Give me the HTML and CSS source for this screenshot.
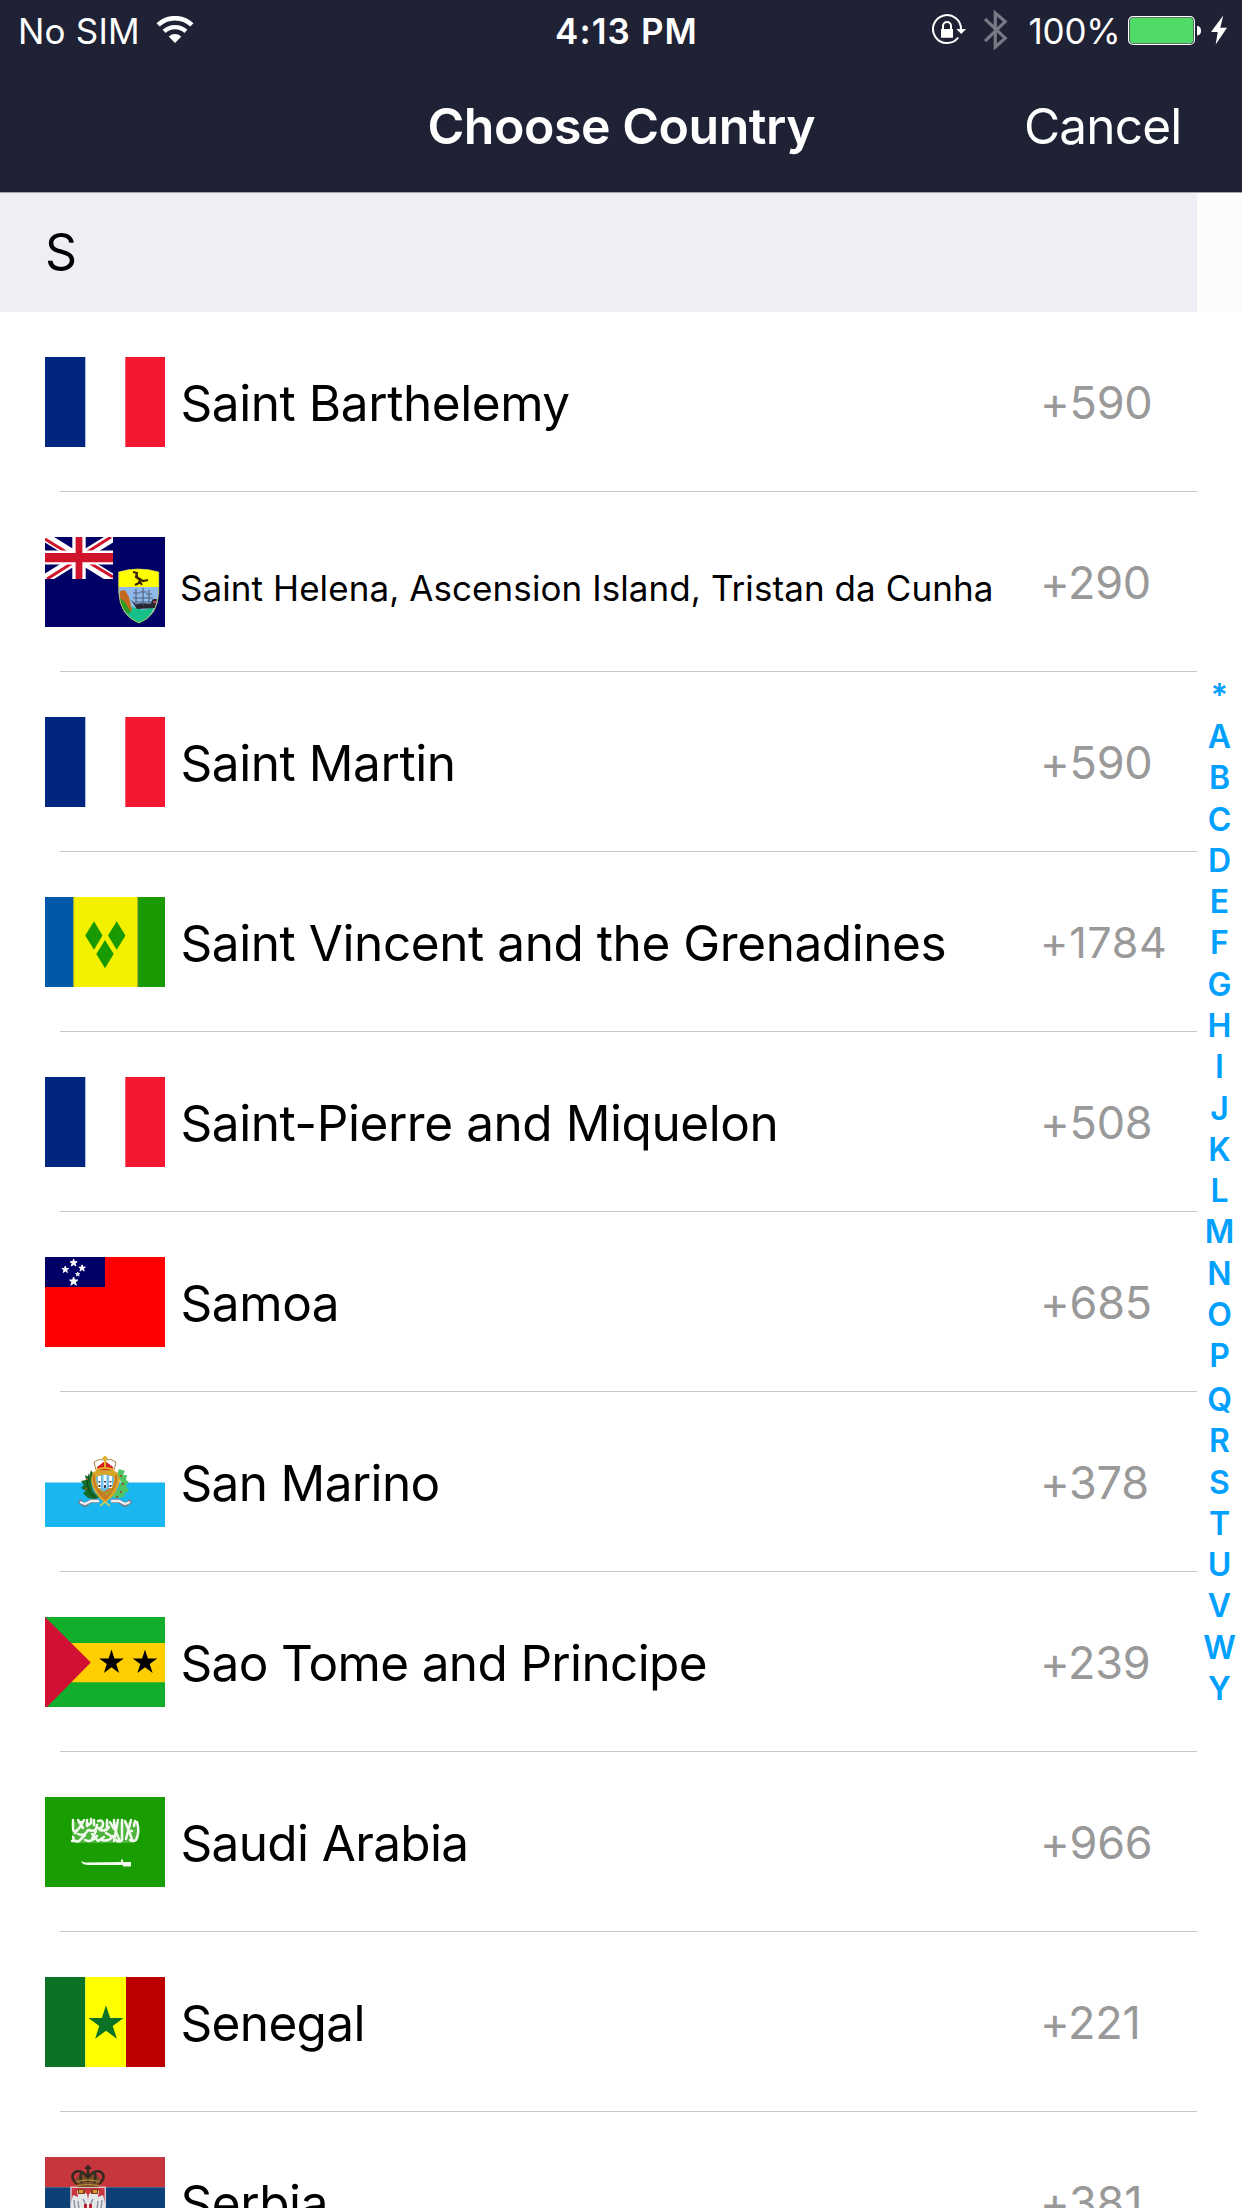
FILE: index.html
```html
<!DOCTYPE html>
<html lang="en">
<head>
<meta charset="utf-8">
<title>Choose Country</title>
<link rel="stylesheet" href="styles.css">
</head>
<body>
<svg class="defs" aria-hidden="true">
  <symbol id="star" viewBox="-1 -1 2 2"><path d="M0-1 .2245-.309 .951-.309 .363.118 .588.809 0 .382-.588.809-.363.118-.951-.309-.2245-.309Z"/></symbol>
  <symbol id="fr" viewBox="0 0 120 90"><path fill="#fff" d="M0 0h120v90H0z"/><path fill="#00267f" d="M0 0h40.300v90H0z"/><path fill="#f31830" d="M80.300 0H120v90H80.300z"/></symbol>
</svg>
<header class="header">
  <div class="status">
    <div class="status-left">
      <span class="carrier">No SIM</span>
      <svg class="wifi" width="38" height="28" viewBox="0 0 38 28">
        <g fill="none" stroke="#fff"><path stroke-width="4.700" d="M2.100 8.900A24.700 24.700 0 0 1 35.900 8.900"/><path stroke-width="4.400" d="M8.100 15.400A15.900 15.900 0 0 1 29.900 15.400"/></g>
        <path fill="#fff" d="M19 27 12.700 20.400Q19 15.700 25.300 20.400Z"/>
      </svg>
    </div>
    <span class="time">4:13 PM</span>
    <div class="status-right">
      <svg class="lock" width="35" height="32" viewBox="0 0 35 32">
        <path fill="none" stroke="#fff" stroke-width="2" d="M29 15.500A14 14 0 1 0 26.200 23.500"/>
        <path fill="#fff" d="M24.300 15h9.800l-4.900 5zM9 15h12v8.700H9z"/>
        <path fill="none" stroke="#fff" stroke-width="2" d="M11 15.500v-3.500a4 4 0 0 1 8 0v3.500"/>
      </svg>
      <svg class="bluetooth" width="24" height="42" viewBox="0 0 24 42"><path fill="none" stroke="#787983" stroke-width="3.200" d="M1 10 21.200 29.200 11.300 38V4L21.200 12.600 1 32"/></svg>
      <span class="percent">100%</span>
      <svg class="battery" width="73" height="29" viewBox="0 0 73 29">
        <rect x=".6" y=".6" width="65.800" height="27.800" rx="4.500" fill="none" stroke="#fff" stroke-width="1.200"/>
        <rect x="1.800" y="1.800" width="63.400" height="25.400" rx="3.500" fill="#4fdb66"/>
        <path fill="#fff" d="M69 9.800q4 .6 4 4.900t-4 4.900z"/>
      </svg>
      <svg class="bolt" width="16" height="30" viewBox="0 0 16 30"><path fill="#fff" d="M12.200.5 0 17h6.700L4.700 29.500 16 12.700H9.300Z"/></svg>
    </div>
  </div>
  <div class="nav">
    <h1 class="title">Choose Country</h1>
    <a class="cancel">Cancel</a>
  </div>
</header>
<main class="content">
  <section class="list">
    <h2 class="letter">S</h2>
    <div class="row">
      <svg class="flag"><use href="#fr"/></svg>
      <span class="name">Saint Barthelemy</span><span class="code">+590</span>
    </div>
    <div class="row">
      <svg class="flag" viewBox="0 0 120 90">
        <path fill="#006" d="M0 0h120v90H0z"/>
        <svg width="68" height="42" viewBox="0 0 68 42">
          <path stroke="#fff" stroke-width="9.500" d="M0 0 68 42M68 0 0 42"/>
          <path stroke="#cf142b" stroke-width="3" d="M0 2 31 21M66 0 36 19M2 42 32 23M68 40 38 22"/>
          <path fill="#fff" d="M27.300 0h13.400v42H27.300zM0 13.600h68v14H0z"/>
          <path fill="#cf142b" d="M30.600 0h6.800v42h-6.800zM0 15.900h68v9.400H0z"/>
        </svg>
        <path fill="#8fbbea" d="M73.700 35Q93 29 113.700 35V55Q113 79 94 86 75 79 73.700 55Z"/>
        <path fill="#ff0" d="M73.700 35Q93 29 113.700 35V50H73.700Z"/>
        <path fill="#17c088" d="M78 71 88 70 98 73 109 70Q105 82 94 86 84 82 78 71Z"/>
        <path fill="#c46a20" d="M75 54 80 53 84 60 87 73 84 76 78 70Q74 63 75 54Z"/>
        <path fill="#2c9b24" d="M75 61 79 64 86 75 83 77 77 70Z"/>
        <path fill="#282633" d="M86 63 91 67 98 66 105 67 108 62 112 62 110 71 92 72Z"/>
        <path fill="none" stroke="#53637c" stroke-width="1.200" d="M91 52v16M98 51v17M104 53v14M88 56h7M95 55h7M101 57h6M88 61h20M90 65h17"/>
        <path fill="none" stroke="#392600" stroke-width="2.200" d="M88 35 92 36 91 40 95 42 94 46 90 48M92 41 98 44 103 43M95 45 97 48M91 36 93 42"/>
        <path fill="#b83c45" d="M108 64h3v2h-3z"/>
        <path fill="none" stroke="#d5d23c" stroke-width=".7" d="M73.700 35Q93 29 113.700 35V55Q113 79 94 86 75 79 73.700 55Z"/>
      </svg>
      <span class="name small">Saint Helena, Ascension Island, Tristan da Cunha</span><span class="code">+290</span>
    </div>
    <div class="row">
      <svg class="flag"><use href="#fr"/></svg>
      <span class="name">Saint Martin</span><span class="code">+590</span>
    </div>
    <div class="row">
      <svg class="flag" viewBox="0 0 120 90">
        <path fill="#f4f100" d="M0 0h120v90H0z"/><path fill="#0058aa" d="M0 0h28.200v90H0z"/><path fill="#199a00" d="M93 0h27v90H93z"/>
        <path fill="none" stroke="#9aa63a" d="M28.700 0v90M92.700 0v90"/>
        <path fill="#199a00" d="M49 24.300 57.500 38.500 49 52.700 40.200 38.500ZM71.700 24.300 80.500 38.500 71.700 52.700 63 38.500ZM60 43 68.700 57 60 71.200 51.300 57Z"/>
      </svg>
      <span class="name">Saint Vincent and the Grenadines</span><span class="code small-code">+1784</span>
    </div>
    <div class="row">
      <svg class="flag"><use href="#fr"/></svg>
      <span class="name">Saint-Pierre and Miquelon</span><span class="code">+508</span>
    </div>
    <div class="row">
      <svg class="flag" viewBox="0 0 120 90">
        <path fill="red" d="M0 0h120v90H0z"/><path fill="#006" d="M0 0h60v30H0z"/>
        <g fill="#fff" stroke="#fff" stroke-width=".25"><use href="#star" x="24.700" y="2" width="7.800" height="7.800"/><use href="#star" x="16.700" y="9" width="7.200" height="7.200"/><use href="#star" x="33.500" y="7.600" width="7.200" height="7.200"/><use href="#star" x="30.200" y="14.700" width="5" height="5"/><use href="#star" x="24.300" y="20.100" width="8.600" height="8.600"/></g>
      </svg>
      <span class="name">Samoa</span><span class="code">+685</span>
    </div>
    <div class="row">
      <svg class="flag" viewBox="0 0 120 90">
        <path fill="#fff" d="M0 0h120v90H0z"/><path fill="#1ab6f0" d="M0 45.500h120V90H0z"/>
        <path fill="#176b25" d="M46 33 49 38 46 46 48 54 54 61 49 62 43 61 38 56 41 54 36 51 39 48 36 44 41 43 40 38 44 40Z"/>
        <path fill="#4fc566" d="M74 32 80 34 78 38 82 38 81 43 84 45 81 48 84 54 80 56 79 60 71 61 66 59 73 53 76 45 72 38Z"/>
        <path fill="none" stroke="#0d4b18" stroke-width="1" d="M44 37 42 46 45 56 51 61"/>
        <path fill="#8a5b30" d="M75 38h2v2h-2zM77 46h2v2h-2zM75 54h2v2h-2zM71 59h2v2h-2zM41 41h2v2h-2zM40 51h2v2h-2z"/>
        <path fill="#d9a62a" d="M48 35Q60 29 72 35L75 42Q74 56 60 66 47 56 46 42Z"/>
        <path fill="#69bde7" d="M51 40Q60 35 69 40 70 51 60 55 51 51 51 40Z"/>
        <path fill="#a3a038" d="M51 51 60 55 69 51Q66 59 60 62 54 59 51 51Z"/>
        <path fill="none" stroke="#c97926" stroke-width="2" d="M49 38Q47 50 60 62 73 50 71 38M53 53 63 61M59 56 66 51"/>
        <path fill="#fff" d="M53 39h3v12h-3zM58.500 38h3v13h-3zM64 39h3v12h-3z"/>
        <path fill="#333c50" d="M53.500 44h2v1.500h-2zM59 44h2v1.500h-2zM64.500 44h2v1.500h-2zM53.500 48h2v2h-2zM59 48h2v3h-2zM64.500 48h2v2h-2z"/>
        <path fill="#fff" stroke="#a78745" stroke-width="1" d="M49 25Q54 21 60 23 66 21 71 25L69 33H51Z"/>
        <path fill="#d51e22" d="M52 30 56 27 60 24 64 27 68 30V33H52Z"/>
        <path fill="none" stroke="#e3af27" stroke-width="2" d="M51 33Q60 29 69 33M60 19v13M57.500 21h5"/>
        <path fill="none" stroke="#777c88" stroke-width="4" d="M34 64 40 68 46 64 54 64M86 64 80 68 74 64 66 64"/>
        <path fill="none" stroke="#eef1f5" stroke-width="2.400" d="M35 65 40 67 46 64 54 64M85 65 80 67 74 64 66 64"/>
        <path fill="none" stroke="#e2ce40" stroke-width="1.600" d="M55 69 60 65 65 69"/>
      </svg>
      <span class="name tight">San Marino</span><span class="code">+378</span>
    </div>
    <div class="row">
      <svg class="flag" viewBox="0 0 120 90">
        <path fill="#12ad2b" d="M0 0h120v90H0z"/><path fill="#ffce00" d="M0 26h120v39.300H0z"/><path fill="#d21034" d="M0 0 45.800 45.500 2 90H0Z"/>
        <use href="#star" x="53.500" y="32.400" width="26" height="26"/><use href="#star" x="87" y="32.400" width="26" height="26"/>
      </svg>
      <span class="name tight">Sao Tome and Principe</span><span class="code">+239</span>
    </div>
    <div class="row">
      <svg class="flag" viewBox="0 0 120 90">
        <path fill="#199d00" d="M0 0h120v90H0z"/>
        <path fill="#8fcf83" d="M27 25h66l1 17-6 4H30l-3-4z" opacity=".45"/>
        <g fill="none" stroke="#f1f9ee" stroke-width="2.500" stroke-linecap="round" stroke-linejoin="round">
          <path d="M28 23v8q0 5 4 2M33 23l5 8M39 23q-4 8-9 13M28 40q1 6 6 4l6-6M33 37q6 3 10-4M27 44h4M42 23v6l4-3v-4M44 33q7 3 8-5M40 43q6 3 12-4M49 23v5M53 24q5-2 5 3t-6 4M47 37l6 7 6-4M55 33q6 2 9-3M62 23v7M65 25l4 7M57 43q7 2 11-4M61 36l5 3M69 23q0 9 5 19M73 23l-4 21M77 23v20q-3 3-6 0M80 24l7 18M86 23l-5 19M90 24l-1 5M92 25q3 10-1 18-3 2-6 0M83 34h4M36 29v-4M51 34l-4 8"/>
        </g>
        <path fill="#f1f9ee" d="M36 64 40 65.500 76 65V62.500H78V65H86V69.500H78V68H76L42 68 38 67Z"/>
      </svg>
      <span class="name tight">Saudi Arabia</span><span class="code">+966</span>
    </div>
    <div class="row">
      <svg class="flag" viewBox="0 0 120 90">
        <path fill="#0b7226" d="M0 0h40.300v90H0z"/><path fill="#ff0" d="M40.300 0h40.700v90H40.300z"/><path fill="#bc0000" d="M81 0h39v90H81z"/>
        <use href="#star" x="42.500" y="28.200" width="37" height="37" fill="#0b7226"/>
      </svg>
      <span class="name tight">Senegal</span><span class="code">+221</span>
    </div>
    <div class="row">
      <svg class="flag" viewBox="0 0 120 90">
        <path fill="#fff" d="M0 0h120v90H0z"/><path fill="#c6363c" d="M0 0h120v30.300H0z"/><path fill="#0c4076" d="M0 30.300h120V60H0z"/>
        <path fill="#c6363c" stroke="#d8c3cf" stroke-width="1.500" d="M26 30.300H60.300V60Q57 70 43 76 29 70 26 60Z"/>
        <path fill="#e4e6ea" d="M36 32 42 37 43 42 44 37 50 32 54 34 53 40 58 38 60 46V60L54 66 43 72 32 66 26 60V46L28 38 33 40 32 34Z"/>
        <path fill="none" stroke="#8a8e99" stroke-width="1.400" d="M29 43 31 60M33 44 35 61M57 43 55 60M53 44 51 61M38 42 41 48M48 42 45 48"/>
        <path fill="#b52431" d="M39 47h8v13h-8z"/><path fill="#eee" d="M42 47h2v13h-2zM39 51h8v2h-8z"/>
        <path fill="#8d3a25" d="M33 32h7v5h-7zM46 32h7v5h-7z"/><path fill="#d49b2d" d="M34 33h4v3h-4zM48 33h4v3h-4z"/>
        <path fill="#7a4a2b" d="M31 21 43 15 55 21 54 30H32Z"/>
        <path fill="none" stroke="#312b20" stroke-width="2.500" d="M32 27Q24 20 30 15 37 12 42 20M54 27Q62 20 56 15 49 12 44 20M43 8V25M40 11h6M37 26Q34 19 37 15M49 26Q52 19 49 15"/>
        <path fill="none" stroke="#ad8235" stroke-width="1.300" d="M31 25Q43 21 55 25M32 29Q43 26 54 29"/>
      </svg>
      <span class="name">Serbia</span><span class="code">+381</span>
    </div>
  </section>
  <nav class="index">
    <span>*</span><span>A</span><span>B</span><span>C</span><span>D</span><span>E</span><span>F</span><span>G</span><span>H</span><span>I</span><span>J</span><span>K</span><span>L</span><span>M</span><span>N</span><span>O</span><span>P</span><span class="q">Q</span><span>R</span><span>S</span><span>T</span><span>U</span><span>V</span><span>W</span><span>Y</span>
  </nav>
</main>
</body>
</html>
```
FILE: styles.css
```css
* { box-sizing: border-box; }
html, body { height: 2208px; overflow: hidden; }
body {
  margin: 0;
  display: flex;
  flex-direction: column;
  background: #fff;
  color: #000;
  font-family: Inter, "Liberation Sans", sans-serif;
}
svg { display: block; flex: none; }
.defs { position: absolute; width: 0; height: 0; }

.header {
  flex: none;
  height: 193px;
  background: #1f2135;
  border-bottom: 1px solid #a5a2a8;
  color: #fff;
}
.status {
  display: grid;
  grid-template-columns: 1fr auto 1fr;
  align-items: center;
  height: 60px;
  font-size: 35px;
  line-height: 42px;
}
.status-left, .status-right { display: flex; align-items: center; }
.status-left { padding-left: 18px; }
.status-right { justify-content: flex-end; padding-right: 15px; }
.carrier, .time, .percent { padding-top: 2px; }
.carrier { letter-spacing: .2px; width: 122.600px; white-space: nowrap; }
.wifi { margin-left: 15px; }
.time { font-weight: 600; letter-spacing: 1.100px; padding-left: 11px; }
.bluetooth { margin-left: 17px; }
.percent { margin-left: 20.500px; width: 91.500px; letter-spacing: -.2px; white-space: nowrap; }
.battery { margin-left: 8px; }
.bolt { margin-left: 10px; }

.nav {
  display: grid;
  grid-template-columns: 1fr auto 1fr;
  align-items: center;
  height: 132px;
  padding-right: 60.500px;
  padding-left: 61px;
}
.title {
  grid-column: 2;
  margin: 0;
  font-size: 50px;
  font-weight: 600;
  letter-spacing: -.460px;
  line-height: 60px;
}
.cancel { justify-self: end; font-size: 49.500px; line-height: 60px; letter-spacing: -.8px; }

.content { flex: 1; min-height: 0; display: flex; }
.list { flex: 1; }
.letter {
  margin: 0;
  height: 119px;
  padding-left: 45px;
  background: #efeef4;
  font-size: 50px;
  font-weight: 400;
  line-height: 119px;
}
.row {
  display: flex;
  align-items: center;
  height: 180px;
  padding-left: 45px;
  background: linear-gradient(#c8c7cc, #c8c7cc) 60px 179px / 1137px 1px no-repeat;
}
.flag { width: 120px; height: 90px; }
.name {
  flex: 1;
  padding: 2px 0 0 15.500px;
  font-size: 49.500px;
  line-height: 60px;
  letter-spacing: -.430px;
  white-space: nowrap;
}
.tight { letter-spacing: -.650px; }
.small { padding: 12px 0 0 15px; font-size: 35px; line-height: 42px; letter-spacing: .080px; }
.code { flex: none; width: 157px; padding-top: 1.500px; color: #999; font-size: 45px; line-height: 54px; letter-spacing: -.250px; }
.small-code { padding-top: 0; font-size: 43px; letter-spacing: .7px; }

.index {
  flex: none;
  display: flex;
  flex-direction: column;
  width: 45px;
  padding-top: 481.750px;
  background: linear-gradient(#fcfcfc, #fcfcfc) 0 0 / 45px 119px no-repeat;
  color: #00a0ff;
  font-size: 32px;
  font-weight: 600;
  line-height: 41.280px;
  text-align: center;
}
.q { margin-top: 2.500px; }
```
